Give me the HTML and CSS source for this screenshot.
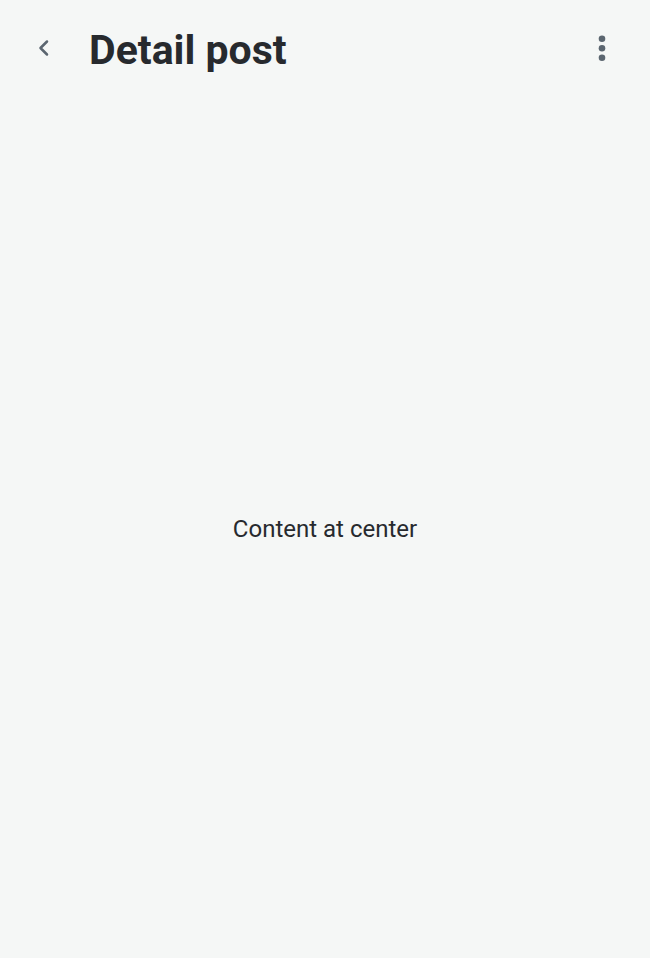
FILE: index.html
```html
<!DOCTYPE html>
<html lang="en">
<head>
<meta charset="utf-8">
<title>Detail post</title>
<link rel="stylesheet" href="styles.css">
</head>
<body>
<div class="screen">
  <header class="topbar">
    <button class="icon-btn back" aria-label="Back">
      <svg width="24" height="24" viewBox="0 0 24 24"><path d="M16 5.5 L9.5 12 L16 18.5" fill="none" stroke="#5b6670" stroke-width="2.5" stroke-linecap="round" stroke-linejoin="round"/></svg>
    </button>
    <h1 class="title">Detail post</h1>
    <button class="icon-btn more" aria-label="More">
      <svg width="24" height="32" viewBox="0 0 24 32"><circle cx="12" cy="6.7" r="3.3" fill="#5b6670"/><circle cx="12" cy="16.3" r="3.3" fill="#5b6670"/><circle cx="12" cy="25.7" r="3.3" fill="#5b6670"/></svg>
    </button>
  </header>
  <main class="content">
    <p class="center-text">Content at center</p>
  </main>
</div>
</body>
</html>
```
FILE: styles.css
```css
html, body {
  margin: 0;
  padding: 0;
  height: 100%;
}
body {
  background: #f5f7f6;
  font-family: Roboto, "Noto Sans", sans-serif;
  color: #272a2e;
}
.screen {
  display: flex;
  flex-direction: column;
  height: 100vh;
}
.topbar {
  height: 100px;
  display: flex;
  align-items: center;
  padding: 0 36px 0 31px;
  box-sizing: border-box;
}
.icon-btn {
  background: none;
  border: 0;
  padding: 0;
  display: flex;
  align-items: center;
  justify-content: center;
  cursor: pointer;
}
.back {
  width: 24px;
  height: 24px;
  margin-top: -4px;
}
.title {
  margin: 0 0 0 34px;
  font-size: 41px;
  font-weight: 700;
  line-height: 1;
  flex: 1;
  color: #272a2e;
}
.more {
  margin-top: -4px;
}
.content {
  flex: 1;
  display: flex;
  align-items: center;
  justify-content: center;
}
.center-text {
  margin: 0;
  font-size: 24px;
  color: #272a2e;
}
```
